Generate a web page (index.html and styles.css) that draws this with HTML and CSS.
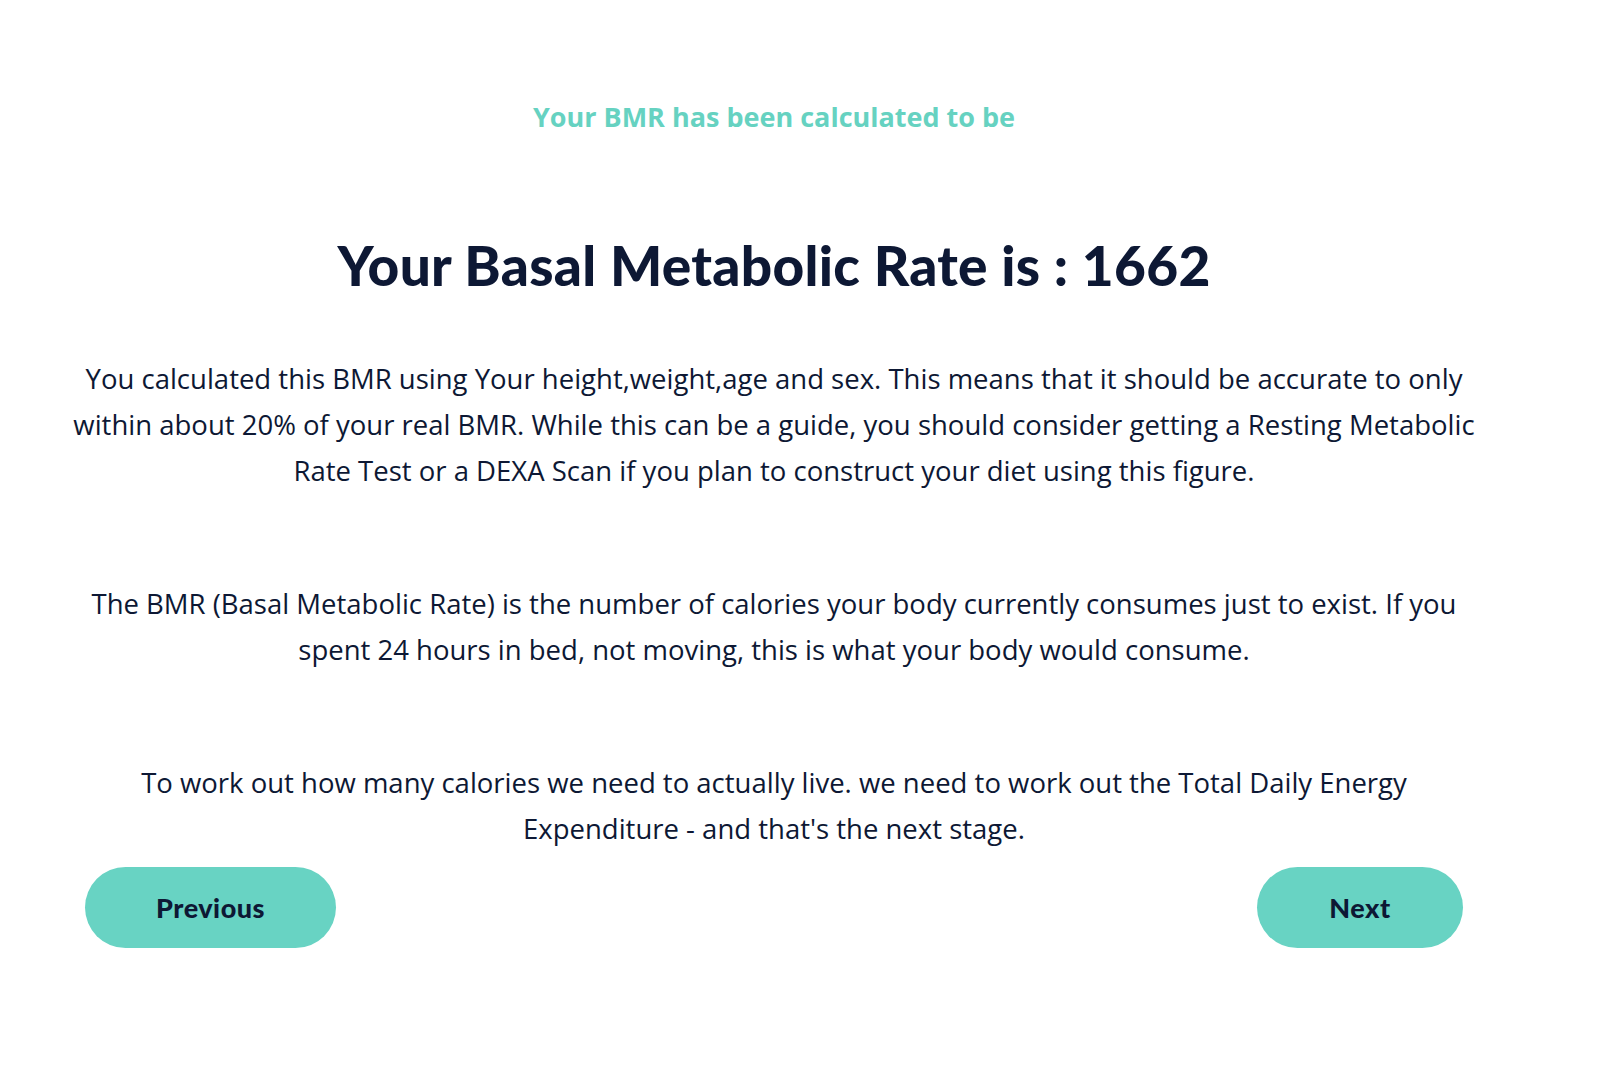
FILE: index.html
```html
<!DOCTYPE html>
<html lang="en">
<head>
<meta charset="utf-8">
<title>BMR Result</title>
<link rel="stylesheet" href="styles.css">
</head>
<body>
<main class="page">
  <p class="lead">Your BMR has been calculated to be</p>
  <h1 class="result">Your Basal Metabolic Rate is : 1662</h1>
  <p class="text">You calculated this BMR using Your height,weight,age and sex. This means that it should be accurate to only within about 20% of your real BMR. While this can be a guide, you should consider getting a Resting Metabolic Rate Test or a DEXA Scan if you plan to construct your diet using this figure.</p>
  <p class="text">The BMR (Basal Metabolic Rate) is the number of calories your body currently consumes just to exist. If you spent 24 hours in bed, not moving, this is what your body would consume.</p>
  <p class="text">To work out how many calories we need to actually live. we need to work out the Total Daily Energy Expenditure - and that's the next stage.</p>
  <div class="nav">
    <button class="btn btn-prev" type="button">Previous</button>
    <button class="btn btn-next" type="button">Next</button>
  </div>
</main>
</body>
</html>
```
FILE: styles.css
```css
html, body {
  margin: 0;
  padding: 0;
  background: #ffffff;
}

.page {
  width: 1548px;
  box-sizing: border-box;
  padding: 99px 69px 0;
  font-family: "Open Sans", "Noto Sans", sans-serif;
  color: #0d1834;
  text-align: center;
}

.lead {
  margin: 0;
  font-size: 27px;
  line-height: 36px;
  font-weight: 700;
  color: #66d2c1;
}

.result {
  margin: 95px 0 0;
  font-family: "Lato", "Noto Sans", sans-serif;
  font-weight: 900;
  font-size: 55px;
  line-height: 70px;
  letter-spacing: 0.3px;
  color: #0d1834;
}

.text {
  margin: 0;
  font-size: 27.5px;
  line-height: 46px;
}

.result + .text {
  margin-top: 56px;
}

.text + .text {
  margin-top: 87px;
}

.nav {
  margin-top: 15px;
  padding: 0 16px;
  display: flex;
  justify-content: space-between;
}

.btn {
  height: 81px;
  border: none;
  border-radius: 41px;
  background: #68d3c3;
  color: #0d1834;
  font-family: "Lato", "Noto Sans", sans-serif;
  font-weight: 900;
  font-size: 27px;
  letter-spacing: 0.5px;
  padding: 0;
  cursor: pointer;
}

.btn-prev {
  width: 251px;
}

.btn-next {
  width: 206px;
}
```
